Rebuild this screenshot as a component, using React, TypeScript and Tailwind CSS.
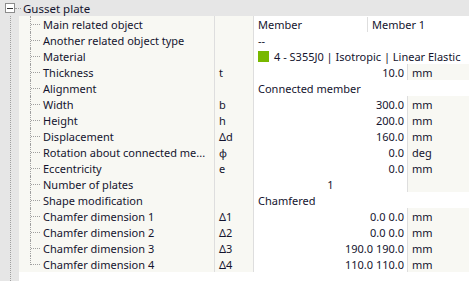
import React from "react";

type Row = {
  label: string;
  sym?: string;
  value?: string;
  value2?: string;
  unit?: string;
  kind: "span" | "num" | "split" | "material" | "center";
};

const rows: Row[] = [
  { label: "Main related object", value: "Member", value2: "Member 1", kind: "split" },
  { label: "Another related object type", value: "--", kind: "span" },
  { label: "Material", value: "4 - S355J0 | Isotropic | Linear Elastic", kind: "material" },
  { label: "Thickness", sym: "t", value: "10.0", unit: "mm", kind: "num" },
  { label: "Alignment", value: "Connected member", kind: "span" },
  { label: "Width", sym: "b", value: "300.0", unit: "mm", kind: "num" },
  { label: "Height", sym: "h", value: "200.0", unit: "mm", kind: "num" },
  { label: "Displacement", sym: "Δd", value: "160.0", unit: "mm", kind: "num" },
  { label: "Rotation about connected me...", sym: "φ", value: "0.0", unit: "deg", kind: "num" },
  { label: "Eccentricity", sym: "e", value: "0.0", unit: "mm", kind: "num" },
  { label: "Number of plates", value: "1", unit: "", kind: "center" },
  { label: "Shape modification", value: "Chamfered", kind: "span" },
  { label: "Chamfer dimension 1", sym: "Δ1", value: "0.0 0.0", unit: "mm", kind: "num" },
  { label: "Chamfer dimension 2", sym: "Δ2", value: "0.0 0.0", unit: "mm", kind: "num" },
  { label: "Chamfer dimension 3", sym: "Δ3", value: "190.0 190.0", unit: "mm", kind: "num" },
  { label: "Chamfer dimension 4", sym: "Δ4", value: "110.0 110.0", unit: "mm", kind: "num" },
];

const TreeCell = ({ last }: { last: boolean }) => (
  <div className="relative w-[24px] shrink-0 self-stretch">
    <div
      className={`absolute left-[11px] top-0 border-l border-dotted border-[#a0a0a0] ${
        last ? "h-[9px]" : "h-full"
      }`}
    />
    <div className="absolute left-[12px] top-[8px] w-[9px] border-t border-dotted border-[#a0a0a0]" />
  </div>
);

const PropRow = ({ row, last }: { row: Row; last: boolean }) => {
  const spans = row.kind === "span" || row.kind === "split" || row.kind === "material";
  return (
    <div className="flex h-4 items-stretch whitespace-nowrap">
      <div className="flex w-[195px] shrink-0 items-center bg-[#f8f8f3]">
        <TreeCell last={last} />
        <span className="pt-px">{row.label}</span>
      </div>
      <div className="w-px shrink-0 bg-[#dedede]" />
      <div className="flex w-[38px] shrink-0 items-center bg-[#f8f8f3] pl-[4px] pt-px">{row.sym}</div>
      <div className="w-px shrink-0 bg-[#dedede]" />
      {spans ? (
        <div className="flex flex-1 items-center bg-white pt-px">
          {row.kind === "split" ? (
            <>
              <div className="flex w-[114px] items-center self-stretch border-r border-[#dedede] pl-[4px]">
                {row.value}
              </div>
              <div className="pl-[4px]">{row.value2}</div>
            </>
          ) : row.kind === "material" ? (
            <div className="flex items-center pl-[4px]">
              <span className="mr-[5px] inline-block h-[11px] w-[11px] bg-[#78b800]" />
              {row.value}
            </div>
          ) : (
            <div className="pl-[4px]">{row.value}</div>
          )}
        </div>
      ) : (
        <>
          <div
            className={`flex w-[153px] shrink-0 items-center bg-white pt-px ${
              row.kind === "center" ? "justify-center" : "justify-end pr-[3px]"
            }`}
          >
            {row.value}
          </div>
          <div className="w-px shrink-0 bg-[#dedede]" />
          <div className="flex flex-1 items-center bg-[#f8f8f3] pl-[4px] pt-px">{row.unit}</div>
        </>
      )}
    </div>
  );
};

export default function App() {
  return (
    <div
      className="flex h-[281px] w-[469px] flex-col overflow-hidden bg-white text-[11px] leading-4 text-[#14142e]"
      style={{ fontFamily: '"Noto Sans", "Open Sans", sans-serif' }}
    >
      <div className="flex h-4 shrink-0 items-center bg-[#e6e6e6]">
        <div className="ml-[5px] flex h-[10px] w-[10px] items-center justify-center border border-[#8c8c8c] bg-white">
          <div className="h-px w-[6px] bg-[#333]" />
        </div>
        <div className="w-[6px] border-t border-dotted border-[#a0a0a0]" />
        <span className="ml-[2px] pt-px text-[11.5px]">Gusset plate</span>
      </div>
      <div className="flex flex-1">
        <div className="w-[19px] shrink-0 bg-[#e6e6e6]">
          <div className="ml-[10px] h-full border-l border-dotted border-[#a0a0a0]" />
        </div>
        <div className="flex flex-1 flex-col">
          {rows.map((r, i) => (
            <PropRow key={r.label} row={r} last={i === rows.length - 1} />
          ))}
        </div>
      </div>
    </div>
  );
}
